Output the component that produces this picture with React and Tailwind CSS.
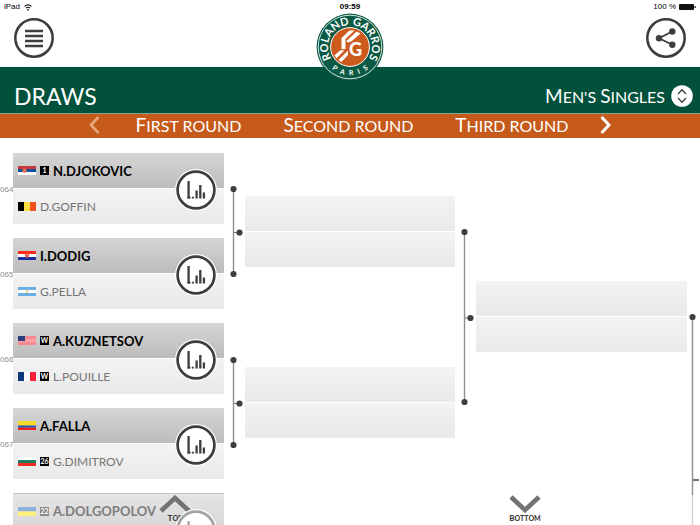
const MATCHES = [
  {
    id: '064',
    players: [
      { name: 'N.DJOKOVIC', flag: 'srb', seed: '1', winner: true },
      { name: 'D.GOFFIN', flag: 'bel' },
    ],
  },
  {
    id: '065',
    players: [
      { name: 'I.DODIG', flag: 'cro', winner: true },
      { name: 'G.PELLA', flag: 'arg' },
    ],
  },
  {
    id: '066',
    players: [
      { name: 'A.KUZNETSOV', flag: 'usa', seed: 'W', winner: true },
      { name: 'L.POUILLE', flag: 'fra', seed: 'W' },
    ],
  },
  {
    id: '067',
    players: [
      { name: 'A.FALLA', flag: 'col', winner: true },
      { name: 'G.DIMITROV', flag: 'bul', seed: '26' },
    ],
  },
  {
    id: '068',
    faded: true,
    players: [{ name: 'A.DOLGOPOLOV', flag: 'ukr', seed: '22', winner: true }],
  },
];

const FLAGS = {
  srb: { bands: ['#c6363c', '#0c4ea0', '#ffffff'], emblem: '#e8684a' },
  bel: { vertical: true, bands: ['#000000', '#fae042', '#f4501e'] },
  cro: { bands: ['#ff2a1a', '#ffffff', '#1b2f9c'], emblem: '#ee6a5c' },
  arg: { bands: ['#6aaee6', '#ffffff', '#6aaee6'], emblem: '#f6c36a' },
  usa: { bands: ['#f58a92', '#f9a0a6', '#f58a92'], canton: '#2f3c7e' },
  fra: { vertical: true, bands: ['#0a3a7a', '#ffffff', '#fb1f3a'] },
  col: { bands: ['#fbdc1e', '#fbdc1e', '#2a55a8', '#f2201c'] },
  bul: { bands: ['#ffffff', '#1f7a5c', '#ee2a22'] },
  ukr: { bands: ['#8fb0dc', '#fff07a'] },
};

function Flag({ code }) {
  const { bands, vertical, emblem, canton } = FLAGS[code];
  const size = (vertical ? 18 : 9) / bands.length;

  return (
    <svg className="h-[9px] w-[18px] shrink-0" viewBox="0 0 18 9" aria-hidden="true">
      {bands.map((color, i) =>
        vertical ? (
          <rect key={i} x={i * size} y="0" width={size} height="9" fill={color} />
        ) : (
          <rect key={i} x="0" y={i * size} width="18" height={size} fill={color} />
        )
      )}
      {canton && <rect width="7" height="5" fill={canton} />}
      {emblem && <circle cx={code === 'srb' ? 6.5 : 9} cy="4.5" r={code === 'arg' ? 1.2 : 2.2} fill={emblem} />}
    </svg>
  );
}

function Logo() {
  return (
    <svg className="size-[68px]" viewBox="0 0 68 68" role="img" aria-label="Roland Garros Paris">
      <defs>
        <path id="arc-top" d="M16 46.6 A22 22 0 1 1 52 46.6" />
        <path id="arc-bottom" d="M6.5 41 A28.4 28.4 0 0 0 61.5 41" />
      </defs>
      <circle cx="34" cy="34" r="33.4" fill="#0b5a45" />
      <circle cx="34" cy="34" r="31.8" fill="none" stroke="#e4efea" strokeWidth="0.9" />
      <circle cx="34" cy="34" r="19.4" fill="#cc5a1c" stroke="#ffffff" strokeWidth="1" />
      <g fill="#ffffff">
        <path d="M25.5 25 L33.5 17.5 H38.5 L29.5 26 V36 H25.5 Z" />
        <path d="M31 27.5 L40.5 18.5 L44.5 20.5 L36.5 27.5 L33 29.5 L30.5 29 Z" />
        <path d="M18.2 42.5 L24.5 37.2 H28.5 L20.6 45.2 Z" />
        <path d="M22.4 47 L32 37.5 V42 L25.4 49 Z" />
      </g>
      <text x="33" y="42.5" fill="#ffffff" className="font-['Lato',sans-serif] text-[18px] font-black">G</text>
      <text fill="#ffffff" textAnchor="middle" className="font-['Lato',sans-serif] text-[11px] font-bold">
        <textPath href="#arc-top" startOffset="50%">ROLAND GARROS</textPath>
      </text>
      <text fill="#ffffff" textAnchor="middle" className="font-['Lato',sans-serif] text-[7px] font-bold whitespace-pre">
        <textPath href="#arc-bottom" startOffset="50%">{'P   A   R   I   S'}</textPath>
      </text>
    </svg>
  );
}

function StatusBar() {
  return (
    <div className="grid grid-cols-3 items-center px-1 pt-[2px] font-['Liberation_Sans',sans-serif] text-[8px] leading-[10px] text-black">
      <div className="flex items-center gap-1">
        <span>iPad</span>
        <svg className="h-[7px] w-[8px]" viewBox="0 0 8 7" fill="none" stroke="#111111" aria-hidden="true">
          <path d="M0.5 2.4 Q4 -0.6 7.5 2.4" strokeWidth="1.1" />
          <path d="M1.9 4.2 Q4 2.4 6.1 4.2" strokeWidth="1.1" />
          <circle cx="4" cy="5.8" r="0.9" fill="#111111" stroke="none" />
        </svg>
      </div>
      <span className="text-center font-bold">09:59</span>
      <div className="flex items-center justify-end gap-[3px]">
        <span>100 %</span>
        <svg className="h-[6px] w-[17px]" viewBox="0 0 17 6" fill="#111111" aria-hidden="true">
          <rect width="15" height="6" rx="1" />
          <rect x="15.5" y="2" width="1.2" height="2" />
        </svg>
      </div>
    </div>
  );
}

function Header() {
  return (
    <header>
      <div className="h-[67px]">
        <StatusBar />
        <div className="flex items-start justify-between px-[14px] pt-[6px]">
          <button aria-label="Menu" className="size-10">
            <svg viewBox="0 0 40 40" fill="none" stroke="#3f3d3e">
              <circle cx="20" cy="20" r="18.7" strokeWidth="2.6" />
              <path d="M11 13 H29 M11 18 H29 M11 23 H29 M11 28 H29" strokeWidth="2.4" />
            </svg>
          </button>
          <div className="relative z-10 -mt-[5px] h-0">
            <Logo />
          </div>
          <button aria-label="Share" className="size-10">
            <svg viewBox="0 0 40 40" fill="none" stroke="#3f3d3e">
              <circle cx="20" cy="20" r="18.7" strokeWidth="2.6" />
              <path d="M26.3 13.5 L13 20.2 L26.3 26.8" strokeWidth="1.8" />
              <g fill="#3f3d3e" stroke="none">
                <circle cx="26.3" cy="13.5" r="3.2" />
                <circle cx="13" cy="20.2" r="3.2" />
                <circle cx="26.3" cy="26.8" r="3.2" />
              </g>
            </svg>
          </button>
        </div>
      </div>

      <div className="flex h-[47px] items-end justify-between border-b border-[#7fa596] bg-[#02513c] pr-[7px] pb-[6px] pl-[14px] text-white">
        <h1 className="text-[23px] leading-[22px]">DRAWS</h1>
        <button aria-label="Men's Singles" className="flex items-center gap-[6px] text-[16px] leading-[20px]">
          <span>
            <span className="text-[19px]">M</span>EN'S <span className="text-[19px]">S</span>INGLES
          </span>
          <svg className="size-[22px]" viewBox="0 0 22 22" aria-hidden="true">
            <circle cx="11" cy="11" r="10.8" fill="#ffffff" />
            <path d="M7 9 L11 4.8 L15 9 M7 13 L11 17.2 L15 13" fill="none" stroke="#3f3d3e" strokeWidth="1.3" />
          </svg>
        </button>
      </div>
    </header>
  );
}

function RoundTab({ initial, rest }) {
  return (
    <button className="text-[16px] leading-[20px] whitespace-nowrap">
      <span className="text-[19px]">{initial}</span>
      {rest}
    </button>
  );
}

function RoundNav() {
  return (
    <nav className="flex h-[24px] items-center justify-center bg-[#c65a1a] pb-[2px] text-white">
      <button aria-label="Previous round" className="mr-9">
        <svg className="h-[18px] w-[11px]" viewBox="0 0 11 18" fill="none" stroke="#e6a781" strokeWidth="2.6">
          <path d="M9.5 1 L2 9 L9.5 17" />
        </svg>
      </button>
      <div className="flex gap-[42px]">
        <RoundTab initial="F" rest="IRST ROUND" />
        <RoundTab initial="S" rest="ECOND ROUND" />
        <RoundTab initial="T" rest="HIRD ROUND" />
      </div>
      <button aria-label="Next round" className="ml-8">
        <svg className="h-[18px] w-[11px]" viewBox="0 0 11 18" fill="none" stroke="#ffffff" strokeWidth="3">
          <path d="M1.5 1 L9 9 L1.5 17" />
        </svg>
      </button>
    </nav>
  );
}

function PlayerRow({ player, faded }) {
  const background = faded
    ? 'border-t border-[#c4c4c4] bg-linear-to-b from-[#e4e4e4] to-[#d8d8d8]'
    : player.winner
    ? 'bg-linear-to-b from-[#d6d6d6] to-[#bcbcbc]'
    : 'bg-linear-to-b from-[#f3f3f3] to-[#e9e9e9]';
  const text = faded
    ? 'text-[13px] font-bold text-[#7c7c7c]'
    : player.winner
    ? 'text-[13px] font-bold text-black'
    : 'text-[12px] text-[#757575]';

  return (
    <div className={`flex h-[35px] items-center gap-1 pl-[5px] ${background}`}>
      <Flag code={player.flag} />
      {player.seed && (
        <span
          className={`flex size-[9px] items-center justify-center text-[7px] leading-[9px] font-bold text-white ${
            faded ? 'bg-[#8a8a8a]' : 'bg-black'
          }`}
        >
          {player.seed}
        </span>
      )}
      <span className={`leading-[18px] ${text}`}>{player.name}</span>
    </div>
  );
}

function MatchCard({ match }) {
  return (
    <article className="relative flex flex-col gap-px">
      {match.players.map((player) => (
        <PlayerRow key={player.name} player={player} faded={match.faded} />
      ))}
      <button aria-label="Match statistics" className="absolute top-4 right-[7px] z-20 size-[42px]">
        <svg viewBox="0 0 42 42" fill="none" stroke={match.faded ? '#a3a3a3' : '#3f3d3e'}>
          <circle cx="21" cy="21" r="21" fill="#ffffff" stroke="none" />
          <circle cx="21" cy="21" r="18.4" strokeWidth="2.7" />
          <path d="M13.6 12 V29.5 M21.6 21.5 V29.5 M25.3 16 V29.5 M28.9 23.5 V29.5" strokeWidth="2.3" />
          <path d="M12.5 28.6 H15.5 M16.9 28.6 H18.9" strokeWidth="1.9" />
        </svg>
      </button>
    </article>
  );
}

function EmptyCard() {
  return (
    <div className="flex flex-col gap-px">
      <div className="h-[35px] bg-linear-to-b from-[#f3f3f3] to-[#e9e9e9]" />
      <div className="h-[35px] bg-linear-to-b from-[#f3f3f3] to-[#e9e9e9]" />
    </div>
  );
}

// Joins two matches to the slot their winners meet in
function Connector({ span }) {
  const middle = 4 + span / 2 + 1;
  return (
    <svg className="w-[21px]" height={span + 8} viewBox={`0 0 21 ${span + 8}`} aria-hidden="true">
      <path d={`M9.5 4 V${span + 4}`} stroke="#8f8f8f" strokeWidth="1.4" />
      <path d={`M10 ${middle} H16`} stroke="#6f6f6f" />
      <g fill="#403f40">
        <circle cx="9.5" cy="4" r="3.1" />
        <circle cx="15.5" cy={middle} r="3.1" />
        <circle cx="9.5" cy={span + 4} r="3.1" />
      </g>
    </svg>
  );
}

function Bracket() {
  return (
    <section className="flex min-h-0 flex-1 overflow-hidden">
      <div className="flex w-[13px] flex-col gap-[75px] pt-[47px] text-right font-['Liberation_Sans',sans-serif] text-[8px] leading-[10px] text-[#8c8c8c]">
        {MATCHES.filter((match) => !match.faded).map((match) => (
          <span key={match.id}>{match.id}</span>
        ))}
      </div>

      <div className="flex flex-1 flex-col gap-[14px] pt-[15px]">
        {MATCHES.map((match) => (
          <MatchCard key={match.id} match={match} />
        ))}
      </div>

      <div className="flex flex-col gap-[78px] pt-[47px]">
        <Connector span={85} />
        <Connector span={85} />
      </div>

      <div className="flex flex-1 flex-col gap-[100px] pt-[58px]">
        <EmptyCard />
        <EmptyCard />
      </div>

      <div className="pt-[90px]">
        <Connector span={170} />
      </div>

      <div className="flex-1 pt-[143px]">
        <EmptyCard />
      </div>

      <div className="w-[13px] pt-[175px]">
        <svg className="h-[212px] w-[13px]" viewBox="0 0 13 212" aria-hidden="true">
          <path d="M5.5 4 V182" stroke="#8f8f8f" strokeWidth="1.4" />
          <path d="M5.5 182 V212" stroke="#d4d4d4" strokeWidth="1.4" />
          <path d="M6 167 H12" stroke="#4f4f4f" strokeWidth="1.6" />
          <circle cx="5.5" cy="4" r="3.1" fill="#403f40" />
        </svg>
      </div>
    </section>
  );
}

function JumpButton({ initial, rest, path }) {
  return (
    <button className="flex flex-col items-center text-[7px] leading-[10px] font-black text-[#3f3d3e]">
      <svg className="h-[18px] w-8" viewBox="0 0 32 18" fill="none" stroke="#737373" strokeWidth="4.6" aria-hidden="true">
        <path d={path} />
      </svg>
      <span>
        <span className="text-[8px]">{initial}</span>
        {rest}
      </span>
    </button>
  );
}

export default function App() {
  return (
    <main className="relative flex h-screen flex-col overflow-hidden bg-white font-['Lato',sans-serif]">
      <Header />
      <RoundNav />
      <Bracket />
      <div className="absolute inset-x-0 bottom-[2px] z-10 grid grid-cols-2 justify-items-center">
        <JumpButton initial="T" rest="OP" path="M2 16 L16 3 L30 16" />
        <JumpButton initial="B" rest="OTTOM" path="M2 2 L16 15 L30 2" />
      </div>
    </main>
  );
}
